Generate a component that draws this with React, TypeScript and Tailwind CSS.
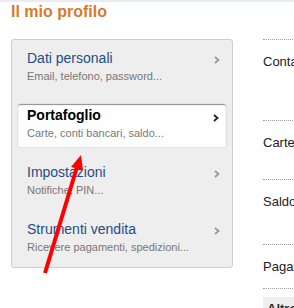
const items = [
  { title: "Dati personali", sub: "Email, telefono, password...", active: false },
  { title: "Portafoglio", sub: "Carte, conti bancari, saldo...", active: true },
  { title: "Impostazioni", sub: "Notifiche, PIN...", active: false },
  { title: "Strumenti vendita", sub: "Ricevere pagamenti, spedizioni...", active: false },
];

const sections = [
  { label: "Contatti", h: "h-[81px]" },
  { label: "Carte", h: "h-[59px]" },
  { label: "Saldo", h: "h-[65px]" },
  { label: "Pagamenti", h: "h-[44px]" },
];

function Chevron({ dark }: { dark: boolean }) {
  return (
    <svg width="6" height="8" viewBox="0 0 6 8" className="absolute right-[7px] top-[10px]">
      <polyline
        points="1,1 4.5,4 1,7"
        fill="none"
        stroke={dark ? "#222" : "#9a9a9a"}
        strokeWidth="1.8"
      />
    </svg>
  );
}

export default function App() {
  return (
    <div className="relative h-[308px] w-full overflow-hidden bg-white font-['Liberation_Sans',Arial,sans-serif]">
      {/* top strip */}
      <div className="h-[2px] bg-[#e8edf3]"></div>

      <div className="pl-[11px] pt-[1px]">
        <h1 className="text-[16px] font-bold leading-[18px] text-[#d97a2b]">Il mio profilo</h1>

        <div className="mt-[18px] flex items-start">
          {/* menu panel */}
          <div className="flex h-[229px] w-[222px] shrink-0 flex-col gap-[12px] rounded-[3px] border border-[#cfcfcf] bg-[#eeeeee] px-[5px] pt-[6px]">
            {items.map((it) => (
              <div
                key={it.title}
                className={
                  it.active
                    ? "relative flex h-[45px] flex-col rounded-[3px] border border-[#e2e2e2] bg-white pl-[9px] pt-[3px] shadow-[inset_0_1px_1px_rgba(0,0,0,0.45)]"
                    : "relative flex h-[45px] flex-col pl-[10px] pt-[4px]"
                }
              >
                <div
                  className={
                    it.active
                      ? "whitespace-nowrap text-[14px] font-bold leading-[16px] text-black"
                      : "whitespace-nowrap text-[14px] leading-[16px] text-[#1f4c8a]"
                  }
                >
                  {it.title}
                </div>
                <div className="mt-[4px] overflow-hidden whitespace-nowrap text-[11px] leading-[13px] text-[#777777]">
                  {it.sub}
                </div>
                <Chevron dark={it.active} />
              </div>
            ))}
          </div>

          {/* right column */}
          <div className="ml-[30px] flex w-[200px] shrink-0 flex-col">
            {sections.map((s) => (
              <div key={s.label} className={`${s.h} border-t border-dotted border-[#9a9a9a] pt-[14px]`}>
                <div className="whitespace-nowrap text-[13px] leading-[16px] text-[#222222]">{s.label}</div>
              </div>
            ))}
            <div className="border-t border-dotted border-[#9a9a9a] pt-[8px]">
              <div className="h-[30px] bg-[#eeeeee] pl-[4px] pt-[4px] text-[13px] font-bold leading-[16px] text-[#333]">
                Altro
              </div>
            </div>
          </div>
        </div>
      </div>

      {/* red annotation arrow */}
      <svg className="pointer-events-none absolute left-0 top-0" width="294" height="308" viewBox="0 0 294 308">
        <line x1="45" y1="273" x2="77" y2="167" stroke="#ff0000" strokeWidth="4" />
        <polygon points="81,155 83,170 71,167" fill="#ff0000" />
      </svg>
    </div>
  );
}
